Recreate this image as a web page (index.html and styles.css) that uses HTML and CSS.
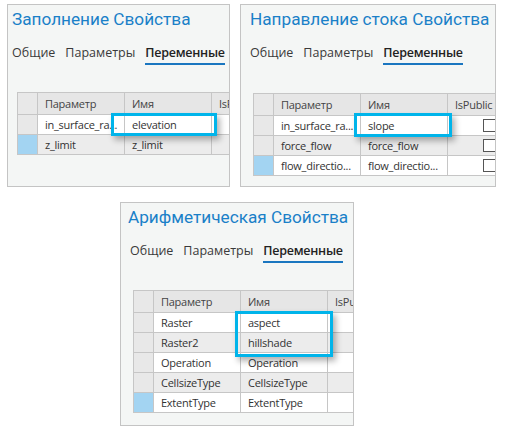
FILE: index.html
```html
<!DOCTYPE html>
<html>
<head>
<meta charset="utf-8">
<link rel="stylesheet" href="styles.css">
</head>
<body>
<div class="page">
  <div class="row-top">
    <section class="panel p1">
      <h1 class="title">Заполнение Свойства</h1>
      <nav class="tabs">
        <span class="tab">Общие</span>
        <span class="tab">Параметры</span>
        <span class="tab active">Переменные</span>
      </nav>
      <div class="grid-wrap">
        <div class="grid">
          <div class="c sel hd"></div><div class="c hd">Параметр</div><div class="c hd">Имя</div><div class="c hd">IsPublic</div>
          <div class="c sel"></div><div class="c">in_surface_ra...</div><div class="c">elevation</div><div class="c"></div>
          <div class="c sel cur"></div><div class="c alt">z_limit</div><div class="c alt">z_limit</div><div class="c alt"></div>
        </div>
        <div class="hl hl1"></div>
      </div>
    </section>
    <section class="panel p2">
      <h1 class="title">Направление стока Свойства</h1>
      <nav class="tabs">
        <span class="tab">Общие</span>
        <span class="tab">Параметры</span>
        <span class="tab active">Переменные</span>
      </nav>
      <div class="grid-wrap">
        <div class="grid">
          <div class="c sel hd"></div><div class="c hd">Параметр</div><div class="c hd">Имя</div><div class="c hd">IsPublic</div>
          <div class="c sel"></div><div class="c">in_surface_ra...</div><div class="c">slope</div><div class="c"><span class="cb"></span></div>
          <div class="c sel"></div><div class="c alt">force_flow</div><div class="c alt">force_flow</div><div class="c alt"><span class="cb"></span></div>
          <div class="c sel cur"></div><div class="c">flow_directio...</div><div class="c">flow_directio...</div><div class="c"><span class="cb"></span></div>
        </div>
        <div class="hl hl2"></div>
      </div>
    </section>
  </div>
  <div class="row-bottom">
    <section class="panel p3">
      <h1 class="title">Арифметическая Свойства</h1>
      <nav class="tabs">
        <span class="tab">Общие</span>
        <span class="tab">Параметры</span>
        <span class="tab active">Переменные</span>
      </nav>
      <div class="grid-wrap">
        <div class="grid">
          <div class="c sel hd"></div><div class="c hd">Параметр</div><div class="c hd">Имя</div><div class="c hd">IsPublic</div>
          <div class="c sel"></div><div class="c">Raster</div><div class="c">aspect</div><div class="c"></div>
          <div class="c sel"></div><div class="c alt">Raster2</div><div class="c alt">hillshade</div><div class="c alt"></div>
          <div class="c sel"></div><div class="c">Operation</div><div class="c">Operation</div><div class="c"></div>
          <div class="c sel"></div><div class="c alt">CellsizeType</div><div class="c alt">CellsizeType</div><div class="c alt"></div>
          <div class="c sel cur"></div><div class="c">ExtentType</div><div class="c">ExtentType</div><div class="c"></div>
        </div>
        <div class="hl hl3"></div>
      </div>
    </section>
  </div>
</div>
</body>
</html>
```

FILE: styles.css
```css
html, body {
  margin: 0;
  padding: 0;
  background: #ffffff;
}
body {
  font-family: "Open Sans", "Noto Sans", "DejaVu Sans", sans-serif;
  color: #333;
}
.page {
  padding: 4px 0 0 7px;
}
.row-top {
  display: flex;
  gap: 10px;
}
.row-bottom {
  margin-top: 15px;
  padding-left: 113px;
}
.panel {
  box-sizing: border-box;
  background: #f4f6f5;
  border: 1px solid #c4c4c4;
  overflow: hidden;
  height: 183px;
}
.p1 { width: 223px; padding-left: 4px; }
.p2 { width: 256px; padding-left: 9px; }
.p3 { width: 234px; height: 224px; padding-left: 7px; }

.title {
  margin: 0;
  padding-top: 2px;
  font-family: Roboto, "Open Sans", sans-serif;
  font-weight: 400;
  font-size: 17.2px;
  line-height: 24px;
  color: #1a80c8;
  white-space: nowrap;
}
.tabs {
  margin-top: 13px;
  display: flex;
  gap: 10px;
  font-size: 12.5px;
  line-height: 18px;
  white-space: nowrap;
}
.p3 .tabs { padding-left: 2px; }
.tab {
  color: #3a3a3a;
  padding-bottom: 1px;
}
.tab.active {
  font-weight: 600;
  color: #222;
  letter-spacing: -0.25px;
  border-bottom: 2px solid #1a76c0;
}
.grid-wrap {
  position: relative;
  margin-top: 27px;
  margin-left: 5px;
}
.p2 .grid-wrap { margin-left: 3px; margin-top: 28px; }
.p3 .grid-wrap { margin-left: 5px; }
.grid {
  display: grid;
  grid-template-columns: 20px 87px 87px 70px;
  grid-template-rows: 22px;
  grid-auto-rows: 20px;
  border-left: 1px solid #c6c6c6;
  border-top: 1px solid #c6c6c6;
  width: max-content;
}
.c {
  box-sizing: border-box;
  border-right: 1px solid #c6c6c6;
  border-bottom: 1px solid #c6c6c6;
  background: #ffffff;
  font-size: 11px;
  letter-spacing: -0.25px;
  line-height: 19px;
  padding-left: 7px;
  white-space: nowrap;
  overflow: hidden;
  color: #333;
  position: relative;
}
.c.hd {
  background: #e6e6e6;
  line-height: 21px;
  color: #444;
}
.c.alt { background: #ececec; }
.c.sel { background: #e8e8e8; padding: 0; }
.c.sel.cur { background: #a3d4f2; }
.cb {
  position: absolute;
  left: 35px;
  top: 3px;
  width: 11px;
  height: 11px;
  border: 1px solid #555;
  background: #fff;
}
.hl {
  position: absolute;
  box-sizing: border-box;
  border: 3px solid #00b4ea;
  box-shadow: 3px 4px 6px rgba(0, 0, 0, 0.3);
}
.hl1 { left: 94px; top: 21px; width: 106px; height: 23px; }
.hl2 { left: 101px; top: 20px; width: 98px; height: 24px; }
.hl3 { left: 102px; top: 21px; width: 98px; height: 46px; }
```
